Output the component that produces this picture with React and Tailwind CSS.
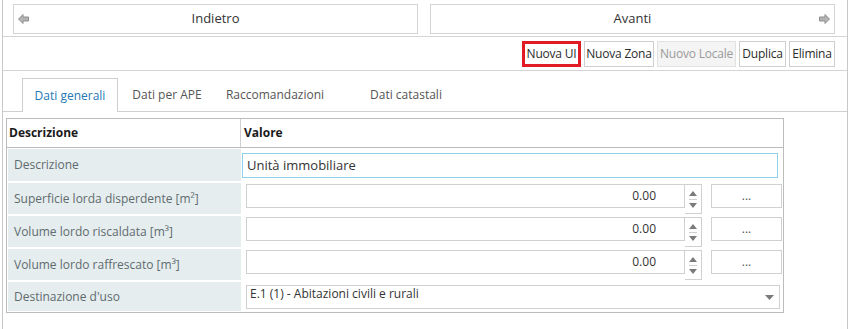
import React from "react";

// ── Small drawings ─────────────────────────────────────────────────────────

function NavArrow({ dir }) {
  return (
    <svg width="11" height="10" viewBox="0 0 11 10" className={dir === "right" ? "rotate-180" : ""}>
      <polygon points="0.5,5 5,0.5 5,3 10.5,3 10.5,7 5,7 5,9.5" fill="#b4b4b4" stroke="#8f8f8f" strokeWidth="1" />
    </svg>
  );
}

function Spinner() {
  return (
    <div className="flex w-[17px] flex-col items-center justify-center gap-[3px] border border-l-0 border-[#d0d0d0] bg-white">
      <svg width="8" height="5" viewBox="0 0 8 5"><polygon points="0,5 4,0 8,5" fill="#7a7a7a" /></svg>
      <div className="h-px w-[8px] bg-[#d0d0d0]" />
      <svg width="8" height="5" viewBox="0 0 8 5"><polygon points="0,0 8,0 4,5" fill="#7a7a7a" /></svg>
    </div>
  );
}

// ── Rows ───────────────────────────────────────────────────────────────────

function Label({ children }) {
  return (
    <div className="flex w-[233px] shrink-0 items-center bg-[#e5edee] pl-[6px] text-[#5f6b6e]">
      {children}
    </div>
  );
}

function NumberRow({ label }) {
  return (
    <div className="flex h-[31px]">
      <Label>{label}</Label>
      <div className="flex pt-px pl-[5px]">
        <div className="flex h-[24px] w-[439px] items-center justify-end border border-[#d0d0d0] pr-[28px] text-[#333]">
          0.00
        </div>
        <Spinner />
        <div className="ml-[9px] flex h-[24px] w-[71px] items-center justify-center border border-[#d0d0d0] text-[#555]">
          ...
        </div>
      </div>
    </div>
  );
}

export default function App() {
  const tools = [
    { label: "Nuova UI", cls: "w-[59px] border-[3px] border-[#e01b24] text-[#2b2b2b]" },
    { label: "Nuova Zona", cls: "w-[70px] border border-[#cfcfcf] text-[#2b2b2b]" },
    { label: "Nuovo Locale", cls: "w-[79px] border border-[#e2e2e2] bg-[#f4f4f4] text-[#9a9a9a]" },
    { label: "Duplica", cls: "w-[47px] border border-[#cfcfcf] text-[#2b2b2b]" },
    { label: "Elimina", cls: "w-[46px] border border-[#cfcfcf] text-[#2b2b2b]" },
  ];

  const tabs = [
    { label: "Dati generali", w: "w-[96px]", active: true },
    { label: "Dati per APE", w: "w-[98px]" },
    { label: "Raccomandazioni", w: "w-[118px]" },
    { label: "Dati catastali", w: "w-[144px]" },
  ];

  return (
    <div className="h-[329px] w-[850px] bg-white font-['Open_Sans',sans-serif] text-[12px]">
      <div className="ml-[2px] mr-[2px] h-full border-x border-[#c8c8c8]">
        {/* Navigation */}
        <div className="flex h-[37px] gap-[12px] border-b border-[#d4d4d4] pt-[4px] pl-[10px] pr-[12px]">
          <div className="relative flex h-[30px] flex-1 items-center justify-center border border-[#d4d4d4] text-[13px] text-[#333]">
            <span className="absolute left-[4px] top-[9px]"><NavArrow dir="left" /></span>
            Indietro
          </div>
          <div className="relative flex h-[30px] flex-1 items-center justify-center border border-[#d4d4d4] text-[13px] text-[#333]">
            Avanti
            <span className="absolute right-[4px] top-[9px]"><NavArrow dir="right" /></span>
          </div>
        </div>

        {/* Toolbar */}
        <div className="flex h-[34px] items-start justify-end gap-[3px] border-b border-[#d4d4d4] pt-[4px] pr-[12px]">
          {tools.map((t) => (
            <div key={t.label} className={`flex h-[26px] items-center justify-center whitespace-nowrap text-[12px] tracking-[-0.2px] ${t.cls}`}>
              {t.label}
            </div>
          ))}
        </div>

        {/* Tabs */}
        <div className="flex h-[41px] items-end border-b border-[#cfcfcf] pl-[19px]">
          {tabs.map((t) => (
            <div
              key={t.label}
              className={
                t.active
                  ? `-mb-px flex h-[34px] ${t.w} items-center justify-center border border-b-0 border-[#cfcfcf] bg-white text-[#2577b6]`
                  : `flex h-[33px] ${t.w} items-center justify-center text-[#555]`
              }
            >
              {t.label}
            </div>
          ))}
        </div>

        {/* Properties table */}
        <div className="ml-[3px] mt-[6px] w-[778px] border border-[#bcbcbc] pb-[1px]">
          <div className="flex h-[29px] border-b border-[#bcbcbc] font-bold text-[#1a1a1a]">
            <div className="flex w-[234px] items-center border-r border-[#d0d0d0] pl-[2px]">Descrizione</div>
            <div className="flex items-center pl-[3px]">Valore</div>
          </div>
          <div className="flex flex-col gap-[2px] px-px pt-px">
            <div className="flex h-[32px]">
              <Label>Descrizione</Label>
              <div className="pt-[4px] pl-[1px]">
                <div className="flex h-[25px] w-[536px] items-center border border-[#8ed2ec] pl-[4px] text-[13px] text-[#333]">
                  Unità immobiliare
                </div>
              </div>
            </div>
            <NumberRow label={<span>Superficie lorda disperdente [m²]</span>} />
            <NumberRow label={<span>Volume lordo riscaldata [m³]</span>} />
            <NumberRow label={<span>Volume lordo raffrescato [m³]</span>} />
            <div className="flex h-[29px]">
              <Label>Destinazione d'uso</Label>
              <div className="pt-[3px] pl-[5px]">
                <div className="flex h-[24px] w-[534px] items-start justify-between border border-[#d0d0d0] pl-[3px] pr-[5px] text-[#333]">
                  <span className="leading-[15px]">E.1 (1) - Abitazioni civili e rurali</span>
                  <svg width="9" height="5" viewBox="0 0 9 5" className="mt-[9px]"><polygon points="0,0 9,0 4.5,5" fill="#7a7a7a" /></svg>
                </div>
              </div>
            </div>
          </div>
        </div>
      </div>
    </div>
  );
}
